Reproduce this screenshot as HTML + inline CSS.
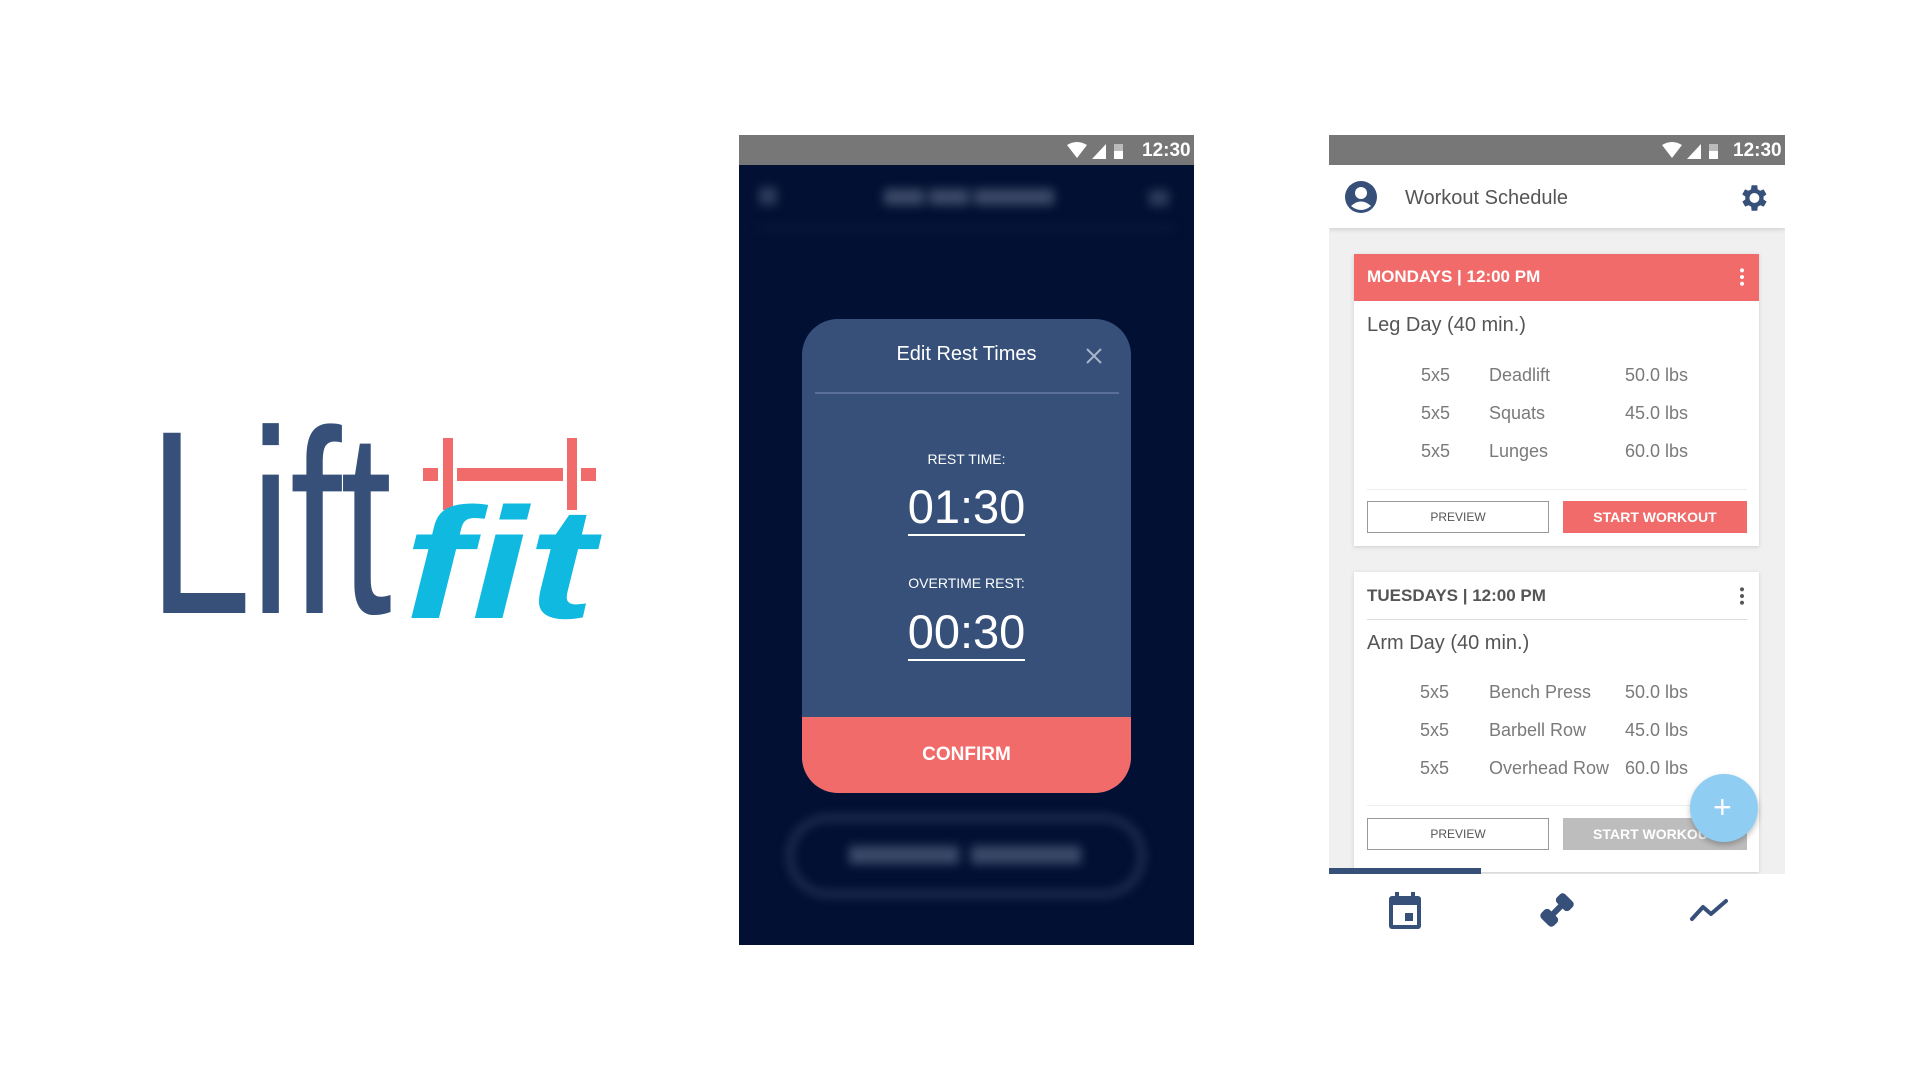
<!DOCTYPE html>
<html><head><meta charset="utf-8"><style>
*{margin:0;padding:0;box-sizing:border-box}
body{width:1920px;height:1080px;background:#fff;position:relative;overflow:hidden;font-family:"Liberation Sans",sans-serif}
.a{position:absolute}
.sb{background:#777;height:30px}
.st{color:#fff;font-weight:bold;font-size:19px}
.row{position:absolute;font-size:18px;color:#7a7a7a}
.btn{position:absolute;height:32px;font-size:12px;display:flex;align-items:center;justify-content:center}
</style></head><body>

<!-- Logo -->
<div class="a" style="left:148px;top:392px;font-size:262px;color:#36507a;line-height:1;transform:scaleX(0.71);transform-origin:0 0;letter-spacing:-2px">Lift</div>
<div class="a" style="left:423px;top:468px;width:15px;height:13px;background:#f26b6b"></div>
<div class="a" style="left:443px;top:438px;width:10px;height:72px;background:#f26b6b"></div>
<div class="a" style="left:457px;top:468px;width:106px;height:13px;background:#f26b6b"></div>
<div class="a" style="left:567px;top:438px;width:10px;height:72px;background:#f26b6b"></div>
<div class="a" style="left:581px;top:468px;width:15px;height:13px;background:#f26b6b"></div>
<div class="a" style="left:404px;top:485px;font-size:158px;font-weight:bold;font-style:italic;color:#10b9e0;line-height:1;transform:scaleX(1.28);transform-origin:0 0">fit</div>

<!-- Left phone -->
<div class="a" style="left:739px;top:135px;width:455px;height:810px;background:#021033;overflow:hidden">
  <div class="sb"></div>
  <svg class="a" style="left:328px;top:7px" width="80" height="18" viewBox="0 0 80 18"><path d="M0 3 Q10 -3 20 3 L10 16 Z" fill="#fff"/><path d="M25 17 L39 2 L39 17 Z" fill="#fff"/><rect x="47" y="2" width="9" height="15" fill="#bbb"/><rect x="47" y="9" width="9" height="8" fill="#fff"/></svg>
  <div class="a st" style="left:403px;top:5px">12:30</div>
  <div class="a" style="left:0;top:0;width:455px;height:810px;filter:blur(5px)">
    <div class="a" style="left:20px;top:52px;width:18px;height:18px;background:#4a5878;opacity:.6"></div>
    <div class="a" style="left:145px;top:54px;width:40px;height:16px;background:#56627e;opacity:.7"></div>
    <div class="a" style="left:190px;top:54px;width:40px;height:16px;background:#56627e;opacity:.7"></div>
    <div class="a" style="left:235px;top:54px;width:80px;height:16px;background:#56627e;opacity:.7"></div>
    <div class="a" style="left:410px;top:55px;width:20px;height:16px;background:#4a5878;opacity:.6"></div>
    <div class="a" style="left:20px;top:92px;width:415px;height:2px;background:#1a2848"></div>
    <div class="a" style="left:48px;top:680px;width:358px;height:82px;border:6px solid #253658;border-radius:41px"></div>
    <div class="a" style="left:110px;top:711px;width:110px;height:18px;background:#4a5878;opacity:.8"></div>
    <div class="a" style="left:232px;top:711px;width:110px;height:18px;background:#4a5878;opacity:.8"></div>
  </div>
  <!-- dialog -->
  <div class="a" style="left:63px;top:184px;width:329px;height:474px;background:#36507a;border-radius:36px;overflow:hidden">
    <div class="a" style="left:0;top:24px;width:100%;text-align:center;color:#fff;font-size:20px">Edit Rest Times</div>
    <svg class="a" style="left:283px;top:28px" width="18" height="18"><path d="M2 2L16 16M16 2L2 16" stroke="#a9b5c9" stroke-width="2"/></svg>
    <div class="a" style="left:13px;top:73px;width:304px;height:2px;background:#5a7099"></div>
    <div class="a" style="left:0;top:132px;width:100%;text-align:center;color:#fff;font-size:14px">REST TIME:</div>
    <div class="a" style="left:0;top:164px;width:100%;text-align:center;color:#fff;font-size:47px;line-height:1"><span style="border-bottom:2px solid #fff;padding-bottom:1px">01:30</span></div>
    <div class="a" style="left:0;top:256px;width:100%;text-align:center;color:#fff;font-size:14px">OVERTIME REST:</div>
    <div class="a" style="left:0;top:289px;width:100%;text-align:center;color:#fff;font-size:47px;line-height:1"><span style="border-bottom:2px solid #fff;padding-bottom:1px">00:30</span></div>
    <div class="a" style="left:0;top:398px;width:100%;height:76px;background:#f26b6b;color:#fff;font-weight:bold;font-size:19px;text-align:center;line-height:76px">CONFIRM</div>
  </div>
</div>

<!-- Right phone -->
<div class="a" style="left:1329px;top:135px;width:456px;height:810px;background:#f0f0f0;overflow:hidden">
  <div class="sb"></div>
  <svg class="a" style="left:333px;top:7px" width="80" height="18" viewBox="0 0 80 18"><path d="M0 3 Q10 -3 20 3 L10 16 Z" fill="#fff"/><path d="M25 17 L39 2 L39 17 Z" fill="#fff"/><rect x="47" y="2" width="9" height="15" fill="#bbb"/><rect x="47" y="9" width="9" height="8" fill="#fff"/></svg>
  <div class="a st" style="left:404px;top:5px">12:30</div>
  <div class="a" style="left:0;top:30px;width:456px;height:63px;background:#fff;box-shadow:0 2px 4px rgba(0,0,0,.12)"></div>
  <svg class="a" style="left:16px;top:46px" width="32" height="32" viewBox="0 0 32 32"><circle cx="16" cy="16" r="16" fill="#36507a"/><circle cx="16" cy="12" r="6" fill="#fff"/><path d="M6 25 Q16 16 26 25 Q16 33 6 25Z" fill="#fff"/></svg>
  <div class="a" style="left:76px;top:52px;font-size:20px;color:#555">Workout Schedule</div>
  <svg class="a" style="left:407px;top:46px" width="34" height="34" viewBox="0 0 24 24"><path fill="#36507a" d="M19.4 13a7.5 7.5 0 000-2l2.1-1.6-2-3.5-2.5 1a7 7 0 00-1.7-1L15 3h-4l-.4 2.9a7 7 0 00-1.7 1l-2.5-1-2 3.5L6.6 11a7.5 7.5 0 000 2l-2.1 1.6 2 3.5 2.5-1a7 7 0 001.7 1L11 21h4l.4-2.9a7 7 0 001.7-1l2.5 1 2-3.5zM13 15.5a3.5 3.5 0 110-7 3.5 3.5 0 010 7z"/></svg>

  <!-- card 1 -->
  <div class="a" style="left:25px;top:119px;width:405px;height:292px;background:#fff;box-shadow:0 1px 4px rgba(0,0,0,.15)">
    <div class="a" style="left:0;top:0;width:100%;height:47px;background:#f26b6b"></div>
    <div class="a" style="left:13px;top:13px;color:#fff;font-weight:bold;font-size:17px">MONDAYS | 12:00 PM</div>
    <div class="a" style="left:386px;top:13px;width:4px;height:20px;background:radial-gradient(circle,#fff 1.8px,transparent 2.2px) 0 0/4px 6.7px"></div>
    <div class="a" style="left:13px;top:60px;font-size:20px;color:#555">Leg Day (40 min.)</div>
    <div class="row" style="left:67px;top:111px">5x5</div><div class="row" style="left:135px;top:111px">Deadlift</div><div class="row" style="left:271px;top:111px">50.0 lbs</div>
    <div class="row" style="left:67px;top:149px">5x5</div><div class="row" style="left:135px;top:149px">Squats</div><div class="row" style="left:271px;top:149px">45.0 lbs</div>
    <div class="row" style="left:67px;top:187px">5x5</div><div class="row" style="left:135px;top:187px">Lunges</div><div class="row" style="left:271px;top:187px">60.0 lbs</div>
    <div class="a" style="left:13px;top:235px;width:380px;height:1px;background:#eee"></div>
    <div class="btn" style="left:13px;top:247px;width:182px;border:1px solid #999;color:#555">PREVIEW</div>
    <div class="btn" style="left:209px;top:247px;width:184px;background:#f26b6b;color:#fff;font-weight:bold;font-size:14px">START WORKOUT</div>
  </div>

  <!-- card 2 -->
  <div class="a" style="left:25px;top:437px;width:405px;height:300px;background:#fff;box-shadow:0 1px 4px rgba(0,0,0,.15)">
    <div class="a" style="left:13px;top:14px;color:#555;font-weight:bold;font-size:17px">TUESDAYS | 12:00 PM</div>
    <div class="a" style="left:386px;top:14px;width:4px;height:20px;background:radial-gradient(circle,#555 1.8px,transparent 2.2px) 0 0/4px 6.7px"></div>
    <div class="a" style="left:13px;top:47px;width:380px;height:1px;background:#ddd"></div>
    <div class="a" style="left:13px;top:60px;font-size:20px;color:#555">Arm Day (40 min.)</div>
    <div class="row" style="left:66px;top:110px">5x5</div><div class="row" style="left:135px;top:110px">Bench Press</div><div class="row" style="left:271px;top:110px">50.0 lbs</div>
    <div class="row" style="left:66px;top:148px">5x5</div><div class="row" style="left:135px;top:148px">Barbell Row</div><div class="row" style="left:271px;top:148px">45.0 lbs</div>
    <div class="row" style="left:66px;top:186px">5x5</div><div class="row" style="left:135px;top:186px">Overhead Row</div><div class="row" style="left:271px;top:186px">60.0 lbs</div>
    <div class="a" style="left:13px;top:233px;width:380px;height:1px;background:#eee"></div>
    <div class="btn" style="left:13px;top:246px;width:182px;border:1px solid #999;color:#555">PREVIEW</div>
    <div class="btn" style="left:209px;top:246px;width:184px;background:#bdbdbd;color:#fff;font-weight:bold;font-size:14px;justify-content:flex-start;padding-left:30px">START WORKOUT</div>
  </div>
  <div class="a" style="left:361px;top:639px;width:68px;height:68px;border-radius:50%;background:#90cdf2;box-shadow:0 3px 6px rgba(0,0,0,.25)"></div>
  <div class="a" style="left:384px;top:656px;color:#fff;font-size:32px;line-height:1">+</div>

  <!-- bottom nav -->
  <div class="a" style="left:0;top:739px;width:456px;height:71px;background:#fff"></div>
  <div class="a" style="left:0;top:733px;width:152px;height:6px;background:#36507a"></div>
  <svg class="a" style="left:58px;top:756px" width="36" height="40" viewBox="0 0 36 40"><rect x="8" y="1" width="4" height="8" fill="#36507a"/><rect x="24" y="1" width="4" height="8" fill="#36507a"/><rect x="2" y="5" width="32" height="33" rx="3" fill="#36507a"/><rect x="6" y="14" width="24" height="20" fill="#fff"/><rect x="18" y="22" width="8" height="8" fill="#36507a"/></svg>
  <svg class="a" style="left:209px;top:756px" width="38" height="38" viewBox="0 0 38 38"><g transform="rotate(-45 19 19)" fill="#36507a"><rect x="2" y="10" width="12" height="18" rx="4"/><rect x="24" y="10" width="12" height="18" rx="4"/><rect x="12" y="16" width="14" height="6"/></g></svg>
  <svg class="a" style="left:360px;top:762px" width="40" height="26" viewBox="0 0 40 26"><path d="M3 22 L14 10 L22 17 L37 4" stroke="#36507a" stroke-width="4" fill="none" stroke-linecap="round" stroke-linejoin="round"/></svg>
</div>
</body></html>
